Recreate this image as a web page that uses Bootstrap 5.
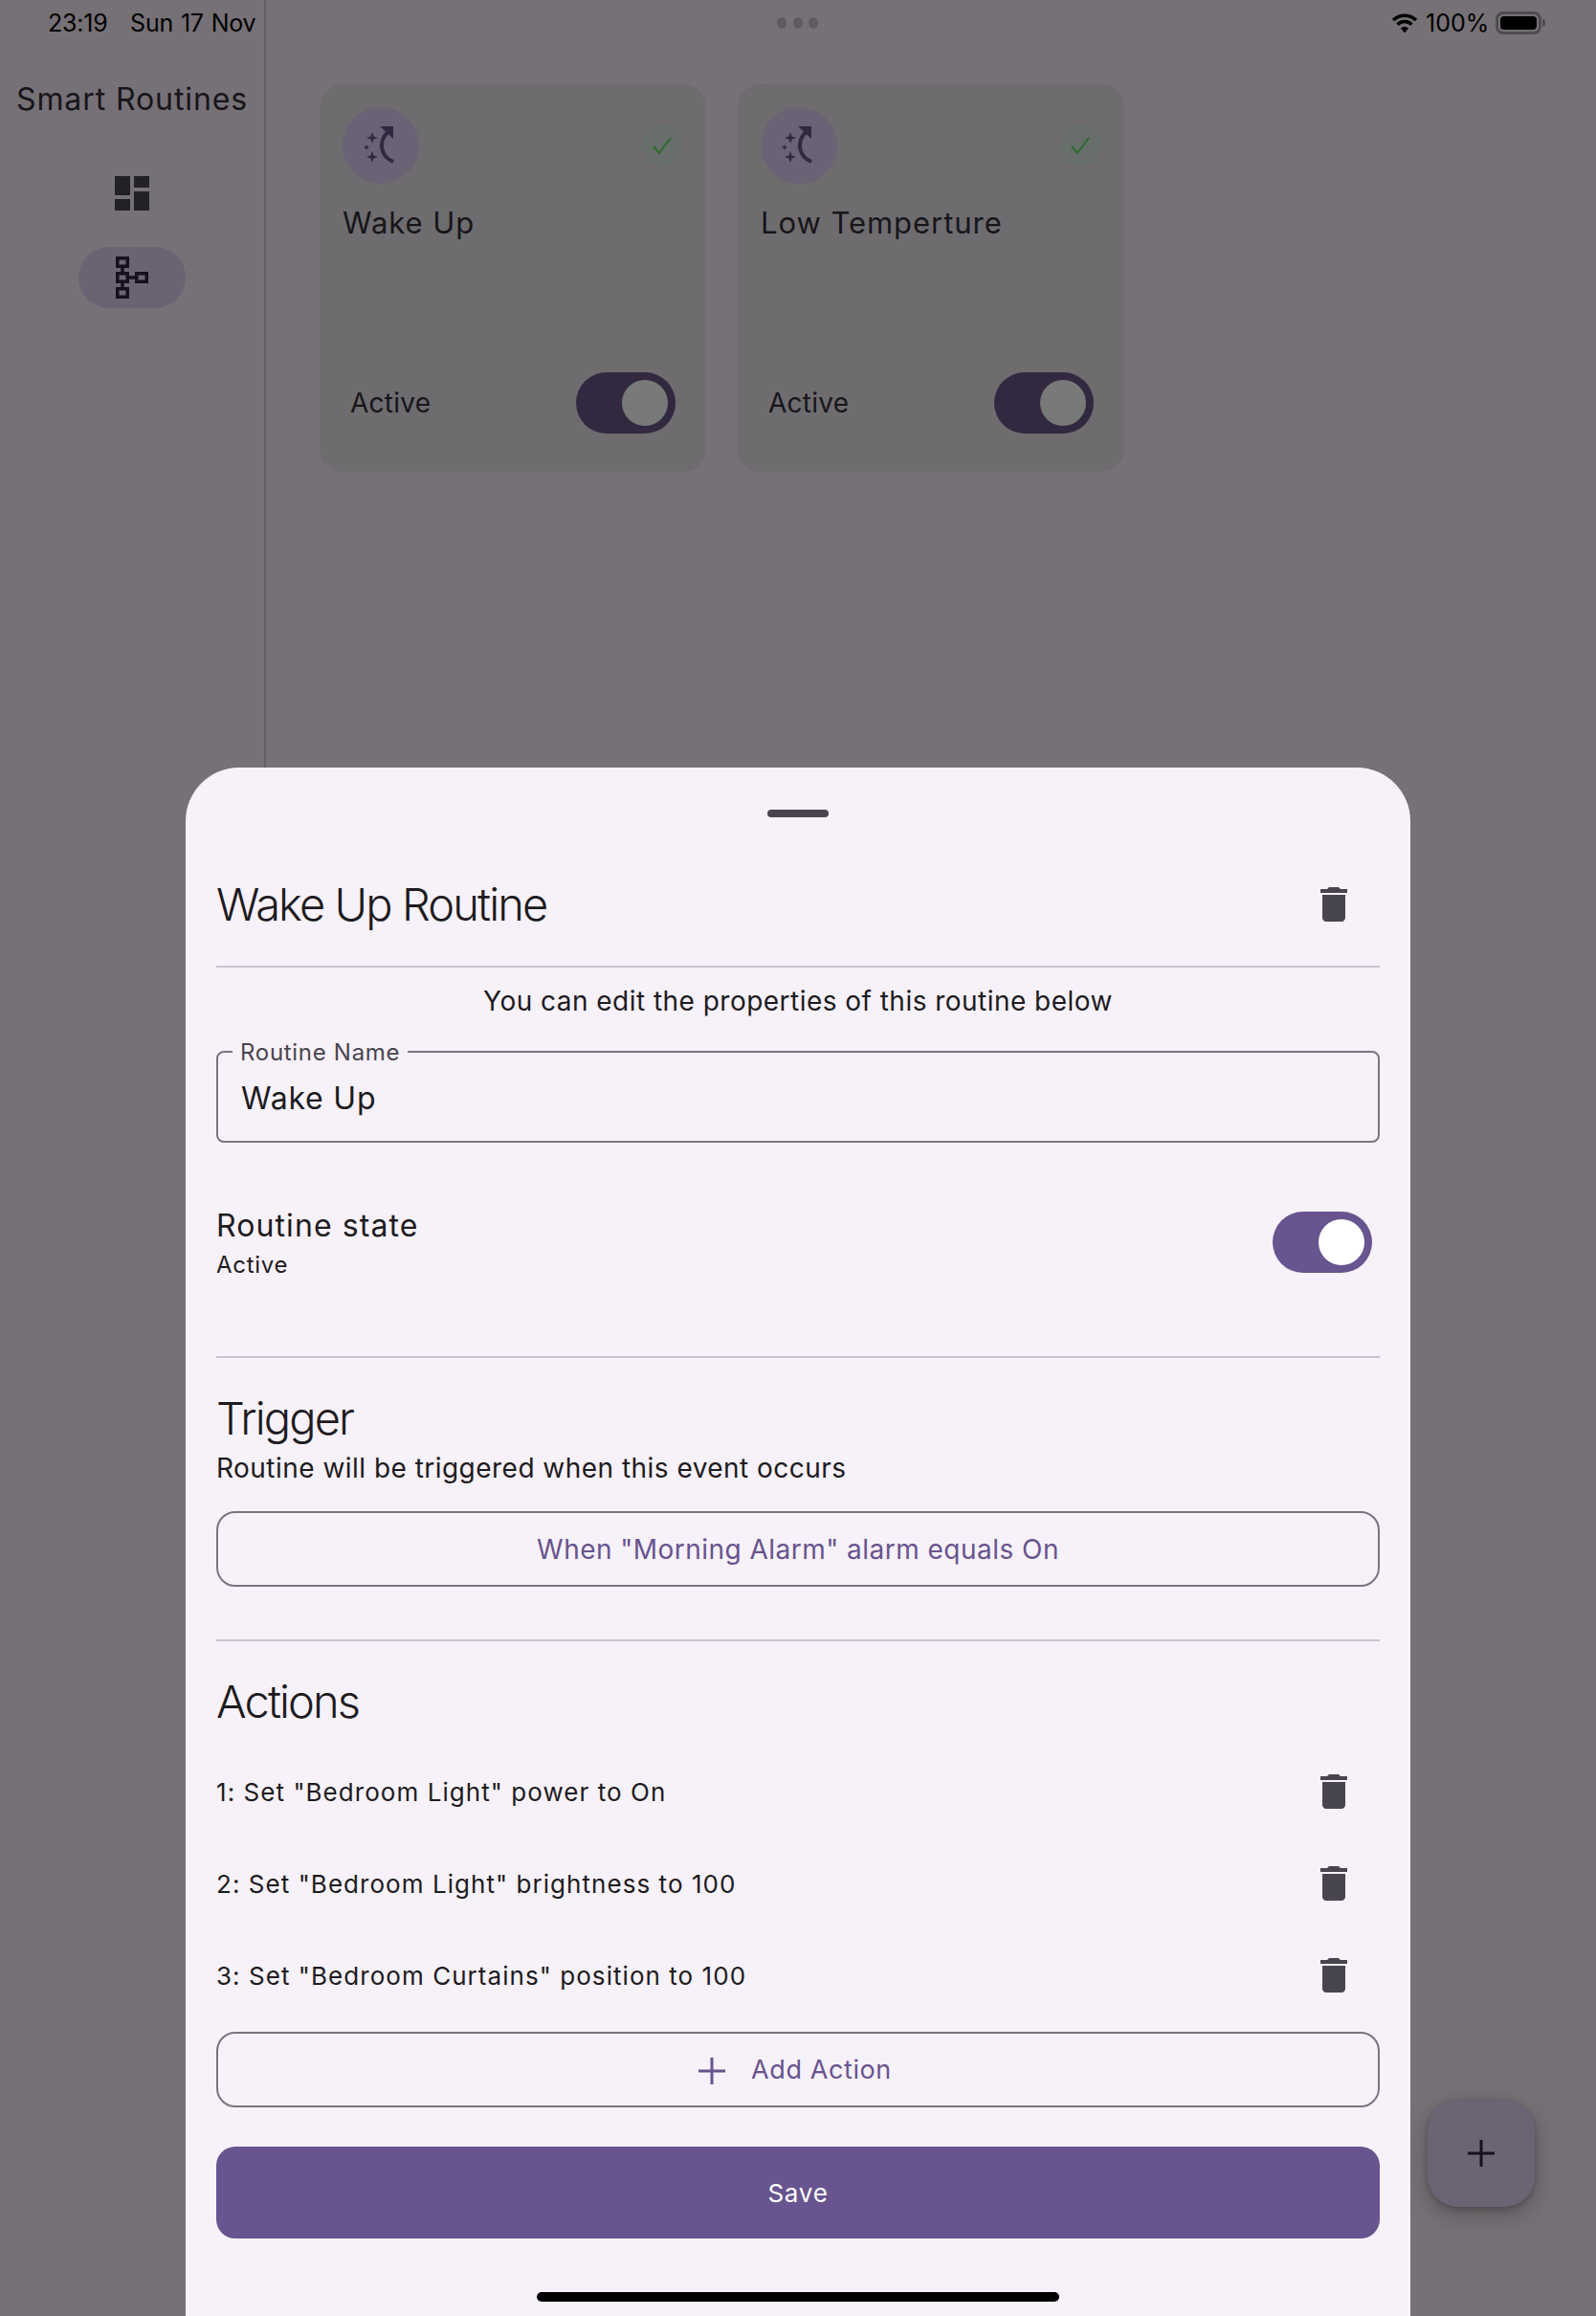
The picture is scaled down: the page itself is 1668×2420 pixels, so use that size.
<!DOCTYPE html>
<html lang="en">
<head>
    <meta charset="UTF-8">
    <meta name="viewport" content="width=device-width, initial-scale=1.0">
    <title>Smart Routines</title>
    <link href="https://cdn.jsdelivr.net/npm/bootstrap@5.3.0/dist/css/bootstrap.min.css" rel="stylesheet">
    <style>
        body { width: 1668px; height: 2420px; overflow: hidden; position: relative; background: #767176; font-family: Inter, "Liberation Sans", sans-serif; color: #1d1b20; }

        /* status bar */
        .status-bar { position: absolute; top: 0; left: 0; width: 100%; height: 48px; color: #000; font-size: 25px; line-height: 48px; }
        .status-time { position: absolute; left: 50px; top: 0; letter-spacing: -.2px; word-spacing: 1px; }
        .status-dots { position: absolute; left: 812px; top: 18px; gap: 6.5px; }
        .status-dots span { width: 10px; height: 12px; border-radius: 50%; background: #5f5b60; }
        .status-right { position: absolute; left: 1454px; top: 0; height: 48px; }
        .battery { width: 48px; height: 24px; border: 3px solid #4f4c50; border-radius: 8px; padding: 2px; margin-left: 7px; }
        .battery i { display: block; width: 100%; height: 100%; background: #000; border-radius: 4px; }
        .battery-nub { width: 3px; height: 8px; background: #4f4c50; border-radius: 0 3px 3px 0; margin-left: 1px; }

        /* page behind the sheet */
        .side-rail { width: 278px; height: 2420px; border-right: 2px solid #625e63; flex: none; }
        .rail-title { margin: 84px 0 0 17px; font-size: 32px; line-height: 40px; letter-spacing: .9px; color: #17151a; white-space: nowrap; }
        .rail-icon { margin-top: 54px; }
        .rail-pill { width: 112px; height: 64px; margin-top: 32px; border-radius: 32px; background: #696374; }
        .routines { padding: 88px 0 0 56px; gap: 33px; }
        .routine-card { width: 404px; height: 405px; padding: 24px; background: #6e6c6f; border: 0; border-radius: 24px; }
        .routine-icon { width: 80px; height: 80px; border-radius: 50%; background: #696375; }
        .routine-ok { width: 44px; height: 44px; border-radius: 50%; background: #686e69; }
        .routine-name { margin-top: 21px; font-size: 31px; line-height: 40px; letter-spacing: .95px; color: #17151a; white-space: nowrap; }
        .routine-foot { padding: 0 8px; margin-bottom: 16px; font-size: 28px; letter-spacing: .25px; color: #17151a; }
        .toggle { width: 104px; height: 64px; border-radius: 32px; padding: 8px; flex: none; }
        .toggle i { display: block; width: 48px; height: 48px; border-radius: 50%; }
        .toggle-dim { background: #322840; }
        .toggle-dim i { background: #777a78; }
        .toggle-on { background: #68548e; }
        .toggle-on i { background: #fff; }

        .fab { position: absolute; left: 1492px; top: 2194px; width: 112px; height: 112px; border-radius: 32px; background: #6c6475; box-shadow: 0 8px 24px rgba(0,0,0,.25), 0 2px 6px rgba(0,0,0,.2); }

        /* bottom sheet */
        .sheet { position: absolute; left: 194px; top: 802px; width: 1280px; height: 1618px; padding: 0 32px; background: #f7f1f9; border-radius: 56px 56px 0 0; }
        .sheet-handle { width: 64px; height: 8px; margin: 44px auto 0; border-radius: 4px; background: #49454f; }
        .sheet-head { height: 80px; margin-top: 51px; margin-bottom: 24px; }
        .head-text { font-size: 47px; line-height: 60px; font-weight: 300; letter-spacing: -1.9px; color: #1d1b20; }
        .rule { height: 2px; background: #cac4d0; margin: 0; border: 0; opacity: 1; }
        .sheet-note { margin-top: 15px; font-size: 28px; line-height: 40px; letter-spacing: .47px; text-align: center; }
        .name-field { position: relative; margin-top: 32px; }
        .name-field label { position: absolute; left: 17px; top: -13px; padding: 0 8px; background: #f7f1f9; font-size: 24px; line-height: 30px; letter-spacing: .7px; color: #49454f; }
        .name-field .form-control { height: 96px; padding: 2px 24px 0; background: transparent; border: 2px solid #79747e; border-radius: 8px; font-size: 32px; letter-spacing: .8px; color: #1d1b20; box-shadow: none; }
        .state-row { height: 80px; margin-top: 64px; margin-bottom: 79px; padding-right: 8px; }
        .state-text { padding-top: 4px; }
        .state-title { font-size: 32px; line-height: 44px; letter-spacing: 1.1px; }
        .state-sub { font-size: 24px; line-height: 38px; letter-spacing: .7px; }
        .section-title { margin-top: 33px; }
        .section-note { margin-top: 2px; font-size: 28px; line-height: 40px; letter-spacing: .47px; }
        .btn-line { display: flex; align-items: center; justify-content: center; width: 100%; height: 79px; background: transparent; border: 2px solid #79747e; border-radius: 20px; font-size: 27px; letter-spacing: .6px; color: #68548e; }
        .trigger-btn { margin-top: 25px; margin-bottom: 55px; font-size: 28px; letter-spacing: .47px; }
        .add-btn { gap: 27px; padding: 2px 18px 0 12px; }
        .action-list { margin-top: 16px; margin-bottom: 11px; }
        .action-row { height: 96px; font-size: 26px; letter-spacing: 1.05px; }
        .trash-slot { width: 48px; margin-right: 24px; flex: none; }
        .btn-save { display: block; width: 100%; height: 96px; margin-top: 41px; background: #68548e; border: 0; border-radius: 20px; font-size: 26px; letter-spacing: .75px; color: #fff; }
        .home-bar { width: 546px; height: 10px; margin: 56px auto 0; border-radius: 5px; background: #000; }
    </style>
</head>
<body>
<svg width="0" height="0" class="position-absolute">
    <symbol id="ic-trash" viewBox="0 0 24 24"><path fill="#49454f" d="M6 19c0 1.1.9 2 2 2h8c1.1 0 2-.9 2-2V7H6v12zM19 4h-3.5l-1-1h-5l-1 1H5v2h14V4z"/></symbol>
    <symbol id="ic-routine" viewBox="0 0 80 80">
        <path fill="#322840" d="M31 26l1.600 4.400L37 32l-4.400 1.600L31 38l-1.600-4.400L25 32l4.400-1.600zM25 39l1 2 2 1-2 1-1 2-1-2-2-1 2-1zM31 46l1.600 4.400L37 52l-4.400 1.600L31 58l-1.600-4.400L25 52l4.400-1.600zM39 20h14v13z"/>
        <path fill="none" stroke="#322840" stroke-width="4" d="M53 57C41 52 36 38 47 26"/>
    </symbol>
    <symbol id="ic-check" viewBox="0 0 44 44"><path fill="none" stroke="#2a6b2e" stroke-width="2" d="M13 23l6 7 12-16"/></symbol>
</svg>

<div class="d-flex">
    <aside class="side-rail">
        <div class="rail-title">Smart Routines</div>
        <div class="d-flex flex-column align-items-center">
            <svg class="d-block rail-icon" width="48" height="48" viewBox="0 0 24 24"><path fill="#222226" d="M3 13h8V3H3v10zm0 8h8v-6H3v6zm10 0h8V11h-8v10zm0-18v6h8V3h-8z"/></svg>
            <div class="rail-pill d-flex align-items-center justify-content-center">
                <svg width="36" height="46" viewBox="0 0 36 46">
                    <g fill="none" stroke="#15101f" stroke-width="3.500">
                        <rect x="2.750" y="2.750" width="10.500" height="8.500"/>
                        <rect x="2.750" y="18.750" width="10.500" height="8.500"/>
                        <rect x="2.750" y="34.750" width="10.500" height="8.500"/>
                        <rect x="22.750" y="18.750" width="10.500" height="8.500"/>
                        <path d="M8 13v5M8 29v5M15 23h6"/>
                    </g>
                </svg>
            </div>
        </div>
    </aside>

    <main class="routines d-flex align-items-start">
        <div class="card routine-card">
            <div class="d-flex justify-content-between align-items-center">
                <div class="routine-icon"><svg class="d-block" width="80" height="80"><use href="#ic-routine"/></svg></div>
                <div class="routine-ok"><svg class="d-block" width="44" height="44"><use href="#ic-check"/></svg></div>
            </div>
            <div class="routine-name">Wake Up</div>
            <div class="routine-foot d-flex justify-content-between align-items-center mt-auto">
                <span>Active</span>
                <span class="toggle toggle-dim d-flex justify-content-end"><i></i></span>
            </div>
        </div>
        <div class="card routine-card">
            <div class="d-flex justify-content-between align-items-center">
                <div class="routine-icon"><svg class="d-block" width="80" height="80"><use href="#ic-routine"/></svg></div>
                <div class="routine-ok"><svg class="d-block" width="44" height="44"><use href="#ic-check"/></svg></div>
            </div>
            <div class="routine-name">Low Temperture</div>
            <div class="routine-foot d-flex justify-content-between align-items-center mt-auto">
                <span>Active</span>
                <span class="toggle toggle-dim d-flex justify-content-end"><i></i></span>
            </div>
        </div>
    </main>
</div>

<!-- status bar -->
<div class="status-bar">
    <span class="status-time">23:19&nbsp;&nbsp; Sun 17 Nov</span>
    <div class="status-dots d-flex"><span></span><span></span><span></span></div>
    <div class="status-right d-flex align-items-center">
        <svg width="28" height="22" viewBox="0 0 28 22" class="me-2">
            <g fill="none" stroke="#000" stroke-width="3.500">
                <path d="M2 8c7-6.500 17-6.500 24 0"/>
                <path d="M6.500 12.500c4.500-4 10.500-4 15 0"/>
            </g>
            <path d="M10 16.500c2.400-2 5.600-2 8 0L14 21.500z"/>
        </svg>
        <span>100%</span>
        <div class="battery"><i></i></div>
        <div class="battery-nub"></div>
    </div>
</div>

<button class="fab btn d-flex align-items-center justify-content-center p-0" type="button" aria-label="Add routine">
    <svg width="28" height="28" viewBox="0 0 28 28"><path fill="none" stroke="#15101f" stroke-width="3" d="M14 0v28M0 14h28"/></svg>
</button>

<!-- bottom sheet -->
<section class="sheet">
    <div class="sheet-handle"></div>
    <div class="sheet-head d-flex justify-content-between align-items-center">
        <div class="head-text">Wake Up Routine</div>
        <svg class="trash-slot" height="48"><use href="#ic-trash"/></svg>
    </div>
    <hr class="rule">
    <div class="sheet-note">You can edit the properties of this routine below</div>
    <div class="name-field">
        <label for="routine-name">Routine Name</label>
        <input id="routine-name" class="form-control" type="text" value="Wake Up">
    </div>
    <div class="state-row d-flex justify-content-between align-items-center">
        <div class="state-text">
            <div class="state-title">Routine state</div>
            <div class="state-sub">Active</div>
        </div>
        <span class="toggle toggle-on d-flex justify-content-end"><i></i></span>
    </div>
    <hr class="rule">
    <div class="head-text section-title">Trigger</div>
    <div class="section-note">Routine will be triggered when this event occurs</div>
    <button class="btn btn-line trigger-btn" type="button">When "Morning Alarm" alarm equals On</button>
    <hr class="rule">
    <div class="head-text section-title">Actions</div>
    <div class="action-list">
        <div class="action-row d-flex justify-content-between align-items-center">
            <span>1: Set "Bedroom Light" power to On</span>
            <svg class="trash-slot" height="48"><use href="#ic-trash"/></svg>
        </div>
        <div class="action-row d-flex justify-content-between align-items-center">
            <span>2: Set "Bedroom Light" brightness to 100</span>
            <svg class="trash-slot" height="48"><use href="#ic-trash"/></svg>
        </div>
        <div class="action-row d-flex justify-content-between align-items-center">
            <span>3: Set "Bedroom Curtains" position to 100</span>
            <svg class="trash-slot" height="48"><use href="#ic-trash"/></svg>
        </div>
    </div>
    <button class="btn btn-line add-btn" type="button">
        <svg width="28" height="28" viewBox="0 0 28 28"><path fill="none" stroke="#68548e" stroke-width="3" d="M14 0v28M0 14h28"/></svg>
        <span>Add Action</span>
    </button>
    <button class="btn btn-save" type="button">Save</button>
    <div class="home-bar"></div>
</section>

<script src="https://cdn.jsdelivr.net/npm/bootstrap@5.3.0/dist/js/bootstrap.bundle.min.js"></script>
</body>
</html>
